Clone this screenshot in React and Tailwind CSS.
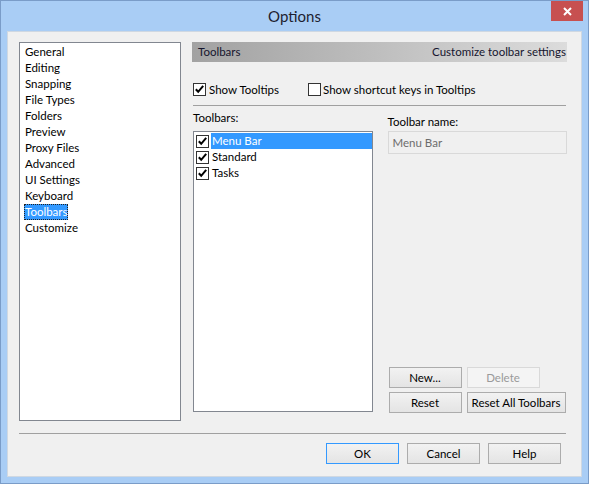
import React from "react";

const categories = [
  "General",
  "Editing",
  "Snapping",
  "File Types",
  "Folders",
  "Preview",
  "Proxy Files",
  "Advanced",
  "UI Settings",
  "Keyboard",
  "Toolbars",
  "Customize",
];

const toolbars = ["Menu Bar", "Standard", "Tasks"];

// Win8-style 13px checkbox
function CheckBox({ checked }) {
  return (
    <svg width="13" height="13" viewBox="0 0 13 13" className="shrink-0">
      <rect x="0.5" y="0.5" width="12" height="12" fill="#fff" stroke="#333" />
      {checked && (
        <path d="M2.8 6.2 L5.2 8.8 L10.2 2.8" fill="none" stroke="#000" strokeWidth="2" />
      )}
    </svg>
  );
}

function Button({ children, width = "w-[73px]", variant }) {
  let look = "border-[#acacac] bg-gradient-to-b from-[#f2f2f2] to-[#e4e4e4] text-black";
  if (variant === "default") look = "border-[#3399ff] bg-gradient-to-b from-[#f2f2f2] to-[#e4e4e4] text-black";
  if (variant === "disabled") look = "border-[#d9d9d9] bg-[#f4f4f4] text-[#9a9a9a]";
  return (
    <button className={`${width} h-[21px] border ${look} flex items-center justify-center leading-none`}>
      {children}
    </button>
  );
}

export default function App() {
  return (
    <div className="w-[589px] h-[484px] border border-[#7a9cc8] bg-[#a9cdf5] flex flex-col font-['Lato',sans-serif] text-[11.5px] text-black select-none">
      {/* title bar */}
      <div className="h-[30px] grid grid-cols-[1fr_auto_1fr] items-start">
        <div />
        <div className="pt-[5px] text-[15px] leading-[20px] text-[#1e1e30]">Options</div>
        <div className="flex justify-end pr-[5px]">
          <div className="w-[32px] h-[20px] bg-[#c75050] flex items-center justify-center">
            <svg width="9" height="9" viewBox="0 0 9 9">
              <path d="M1 1 L8 8 M8 1 L1 8" stroke="#fff" strokeWidth="2" />
            </svg>
          </div>
        </div>
      </div>

      {/* client area */}
      <div className="mx-[6px] h-[446px] border border-[#cfd8e2] bg-[#f0f0f0] pl-[11px] pt-[10px] flex flex-col">
        <div className="flex items-start">
          {/* category list */}
          <div className="w-[162px] h-[379px] border border-[#828790] bg-white pl-[4px] pt-[1px] flex flex-col items-start">
            {categories.map((c) => (
              <div key={c} className="h-[16px] flex items-center">
                {c === "Toolbars" ? (
                  <span className="h-[16px] px-[1px] bg-[#3399ff] text-white outline outline-1 outline-dotted outline-[#222] -outline-offset-1 leading-[16px]">
                    {c}
                  </span>
                ) : (
                  <span className="px-[1px] leading-[16px]">{c}</span>
                )}
              </div>
            ))}
          </div>

          {/* right panel */}
          <div className="ml-[11px] w-[375px] flex flex-col">
            <div className="h-[20px] bg-gradient-to-r from-[#a2a2a2] to-[#dcdcdc] flex items-center justify-between pl-[6px] pr-[1px] text-[#15152e]">
              <span>Toolbars</span>
              <span>Customize toolbar settings</span>
            </div>

            <div className="mt-[21px] pl-[1px] h-[13px] flex items-center">
              <CheckBox checked />
              <span className="ml-[3px]">Show Tooltips</span>
              <div className="ml-[29px] flex items-center">
                <CheckBox />
                <span className="ml-[2px]">Show shortcut keys in Tooltips</span>
              </div>
            </div>

            <div className="mt-[9px] ml-[1px] w-[373px] h-px bg-[#a0a0a0]" />

            <div className="flex items-start">
              <div className="ml-[1px] w-[180px] flex flex-col">
                <div className="mt-[4px] h-[16px] leading-[16px]">Toolbars:</div>
                <div className="mt-[5px] h-[281px] border border-[#828790] bg-white pl-[2px] pt-[1px] flex flex-col">
                  {toolbars.map((t, i) => (
                    <div key={t} className="h-[16px] flex items-center">
                      <CheckBox checked />
                      <span
                        className={`ml-[2px] flex-1 h-[16px] leading-[16px] pl-[1px] ${
                          i === 0 ? "bg-[#3399ff] text-white" : ""
                        }`}
                      >
                        {t}
                      </span>
                    </div>
                  ))}
                </div>
              </div>

              <div className="ml-[15px] w-[180px] flex flex-col">
                <div className="mt-[8px] h-[16px] leading-[16px]">Toolbar name:</div>
                <div className="mt-[1px] h-[23px] border border-[#d9d9d9] bg-[#f0f0f0] pl-[4px] flex items-center text-[#6d6d6d]">
                  Menu Bar
                </div>
                <div className="mt-[213px] ml-[1px] flex gap-[5px]">
                  <Button>New...</Button>
                  <Button variant="disabled">Delete</Button>
                </div>
                <div className="mt-[4px] ml-[1px] flex gap-[5px]">
                  <Button>Reset</Button>
                  <Button width="w-[99px]">Reset All Toolbars</Button>
                </div>
              </div>
            </div>
          </div>
        </div>

        <div className="mt-[12px] w-[547px] h-px bg-[#a0a0a0]" />

        <div className="mt-[9px] w-[542px] flex justify-end gap-[8px]">
          <Button variant="default">OK</Button>
          <Button>Cancel</Button>
          <Button>Help</Button>
        </div>
      </div>
    </div>
  );
}
